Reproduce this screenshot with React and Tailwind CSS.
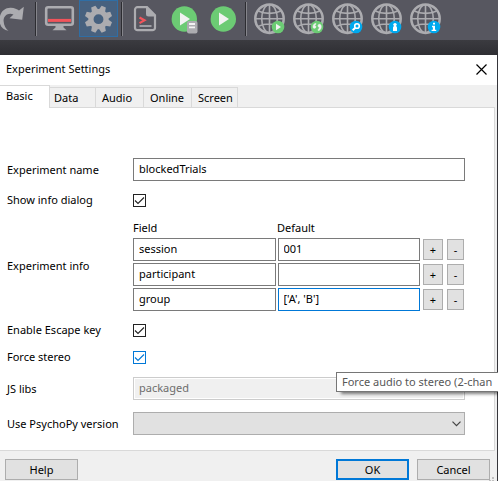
import React from "react";

const toolButton = "flex h-[37px] w-[39px] shrink-0 items-center justify-center";

function Icon({ children }) {
  return (
    <svg width="39" height="37" viewBox="0 0 39 37" fill="none" aria-hidden="true">
      {children}
    </svg>
  );
}

function Separator() {
  return (
    <div className="flex h-[36px] w-[7px] shrink-0 pt-[2px] pl-[2px]">
      <span className="w-px bg-[#2c2c31]" />
      <span className="w-px bg-[#85858b]" />
    </div>
  );
}

function Globe({ label, badge, children }) {
  return (
    <button type="button" aria-label={label} className={toolButton}>
      <Icon>
        <g stroke="#acacb0" strokeWidth="1.6">
          <circle cx="19.5" cy="18.7" r="14.2" strokeWidth="2.5" />
          <ellipse cx="19.5" cy="18.7" rx="7.8" ry="14" />
          <path d="M19.5 4.5v28.4M5.5 18.7h28M8.3 11c6 3.2 16.4 3.2 22.4 0M8.3 26.4c6-3.2 16.4-3.2 22.4 0" />
        </g>
        <circle cx="28" cy="27" r="6.3" fill={badge} />
        {children}
      </Icon>
    </button>
  );
}

const toothAngles = [22.5, 67.5, 112.5, 157.5, 202.5, 247.5, 292.5, 337.5];

function Toolbar() {
  return (
    <div className="flex h-[40px] overflow-hidden bg-[#575760]">
      <button type="button" aria-label="Redo" className={`${toolButton} -ml-1.5`}>
        <Icon>
          <path
            d="M14.5 30.8C9 30 5.500 26 5.500 20C5.500 12 11 7.400 17 7.800C20.500 8 23 9.200 25 10.600L29.800 6.800L28.200 19.800L15.500 18.200L19.500 14.500C14.500 12 9.300 15.500 9.600 21C9.800 25.500 12 29 14.500 30.800Z"
            fill="#acacb0"
          />
        </Icon>
      </button>
      <Separator />
      <button type="button" aria-label="Monitor center" className={toolButton}>
        <Icon>
          <rect x="6.2" y="7.2" width="26.6" height="17.6" rx="2" stroke="#acacb0" strokeWidth="2.6" />
          <path d="M8 20.4h23" stroke="#f2545b" strokeWidth="3" />
          <path d="M15.5 25h8v2.500l3 2.800h-14l3-2.800Z" fill="#acacb0" />
        </Icon>
      </button>
      <button
        type="button"
        aria-label="Experiment settings"
        className={`${toolButton} mr-px border border-[#2f6ea5] bg-[#47617f]`}
      >
        <Icon>
          <g fill="#acacb0">
            <path
              fillRule="evenodd"
              d="M19.5 8.500a10.700 10.700 0 1 0 0 21.400a10.700 10.700 0 1 0 0-21.400ZM19.500 14a5.200 5.200 0 1 1 0 10.400a5.200 5.200 0 1 1 0-10.400Z"
            />
            {toothAngles.map((angle) => (
              <path key={angle} d="M15.900 10l1.200-5.200h4.800l1.200 5.200Z" transform={`rotate(${angle} 19.5 19.2)`} />
            ))}
          </g>
        </Icon>
      </button>
      <Separator />
      <button type="button" aria-label="Compile script" className={toolButton}>
        <Icon>
          <path
            d="M11.500 7.200h9.500l8 8v12.500a2.500 2.500 0 0 1-2.500 2.500h-15a2.500 2.500 0 0 1-2.500-2.500v-18a2.500 2.500 0 0 1 2.500-2.500Z"
            stroke="#acacb0"
            strokeWidth="2.2"
          />
          <path d="M20 6.500l10 10h-7.500a2.500 2.500 0 0 1-2.500-2.500Z" fill="#acacb0" />
          <path d="M13.500 17.500l5 2.800l-5 2.800" stroke="#f2545b" strokeWidth="2.2" />
          <path d="M13.500 26h12" stroke="#acacb0" strokeWidth="1.7" />
        </Icon>
      </button>
      <button type="button" aria-label="Send to runner" className={toolButton}>
        <Icon>
          <circle cx="19.3" cy="19" r="12.7" fill="#6ccb74" />
          <path d="M15 12.500v13l10-6.500Z" fill="#f2f2f2" />
          <rect x="22" y="21" width="10.5" height="12.5" rx="2" fill="#acacb0" />
          <path d="M24 24h6M24 27.300h6" stroke="#f2f2f2" strokeWidth="1.8" />
        </Icon>
      </button>
      <button type="button" aria-label="Run experiment" className={toolButton}>
        <Icon>
          <circle cx="19.3" cy="19" r="12.7" fill="#6ccb74" />
          <path d="M15 12.500v13l10-6.500Z" fill="#f2f2f2" />
        </Icon>
      </button>
      <Separator />
      <Globe label="Run online" badge="#6ccb74">
        <path d="M26 23.800v6.400l5-3.200Z" fill="#f2f2f2" />
      </Globe>
      <Globe label="Sync online" badge="#6ccb74">
        <path
          d="M27 23.500c-2 0-3 1.500-3 3.200c0 1 .6 1.600 1.400 1.600s1.500-.6 1.500-1.400s-.6-1.300-1.200-1.400c.2-.7.7-1 1.300-1.200ZM29.200 30.600c2-.4 3-2 3-3.900c0-1.300-.6-2.400-1.600-2.400s-1.600.7-1.600 1.500s.5 1.400 1.300 1.500c0 1-.4 1.700-1.100 2.300Z"
          fill="#f2f2f2"
          stroke="#f2f2f2"
          strokeWidth=".6"
        />
      </Globe>
      <Globe label="Search online" badge="#00a9ee">
        <circle cx="29" cy="26" r="2.3" stroke="#fff" strokeWidth="1.6" />
        <path d="M27.300 27.700l-2.600 2.500" stroke="#fff" strokeWidth="2" />
      </Globe>
      <Globe label="User account" badge="#00a9ee">
        <circle cx="28" cy="24.6" r="1.7" fill="#fff" />
        <path d="M26 31v-3.300c0-1 .7-1.600 2-1.600s2 .6 2 1.600v3.300Z" fill="#fff" />
      </Globe>
      <Globe label="Online info" badge="#00a9ee">
        <path d="M27 22.800h2v1.800h-2ZM26 25.800h3v4h1.200v1.300h-4.600v-1.300h1.300v-2.600h-.9Z" fill="#fff" />
      </Globe>
    </div>
  );
}

const inputBox =
  "block h-[23px] w-full min-w-0 border border-[#7a7a7a] bg-white px-[5px] pb-[2px] text-black outline-none";
const plainButton = "border border-[#adadad] bg-[#e1e1e1] text-center";

function CheckBox({ id, active }) {
  return (
    <span className="grid size-[13px]">
      <input
        id={id}
        type="checkbox"
        defaultChecked
        className={`peer col-start-1 row-start-1 size-[13px] appearance-none border bg-white ${
          active ? "border-[#0078d7]" : "border-[#222222]"
        }`}
      />
      <svg
        viewBox="0 0 13 13"
        aria-hidden="true"
        className={`pointer-events-none invisible col-start-1 row-start-1 size-[13px] peer-checked:visible ${
          active ? "text-[#0078d7]" : "text-[#222222]"
        }`}
      >
        <path d="M2 6.500l3 3l6-6" fill="none" stroke="currentColor" strokeWidth="1.1" />
      </svg>
    </span>
  );
}

function Row({ label, htmlFor, className = "", children }) {
  return (
    <div className={`grid grid-cols-[126px_minmax(0,1fr)] items-center ${className}`}>
      <label htmlFor={htmlFor}>{label}</label>
      {children}
    </div>
  );
}

const info = [
  { field: "session", value: "001" },
  { field: "participant", value: "" },
  { field: "group", value: "['A', 'B']", focused: true },
];

function ExperimentInfo() {
  return (
    <div className="grid grid-cols-[126px_minmax(0,1fr)] items-center">
      <span>Experiment info</span>
      <div className="flex flex-col gap-[2px]">
        <div className="grid grid-cols-[144fr_188fr] leading-4">
          <span>Field</span>
          <span>Default</span>
        </div>
        {info.map((row) => (
          <div key={row.field} className="flex items-center">
            <div className="grid min-w-0 grow grid-cols-2 gap-[2px]">
              <input aria-label="Field" defaultValue={row.field} className={inputBox} />
              <input
                aria-label={`Default for ${row.field}`}
                defaultValue={row.value}
                className={`${inputBox} ${row.focused ? "border-[#0078d7]!" : ""}`}
              />
            </div>
            <button
              type="button"
              aria-label="Add row"
              className={`${plainButton} ml-[3px] h-[21px] w-5 shrink-0 leading-4`}
            >
              +
            </button>
            <button
              type="button"
              aria-label="Remove row"
              className={`${plainButton} mr-px ml-1 h-[21px] w-[17px] shrink-0 leading-4`}
            >
              -
            </button>
          </div>
        ))}
      </div>
    </div>
  );
}

const tabs = [
  { name: "Data", className: "w-[46px] pl-1" },
  { name: "Audio", className: "w-12 pl-[6px]" },
  { name: "Online", className: "w-12 pl-[6px]" },
  { name: "Screen", className: "w-[46px] pl-[6px]" },
];

export default function App() {
  return (
    <div className="relative overflow-hidden bg-[#36363b] font-['Noto_Sans','Open_Sans',sans-serif] text-[11px] leading-4 text-black">
      <Toolbar />
      <div className="h-[15px] bg-linear-to-b from-[#3b3b40] to-[#2e2e33]" />
      <div role="dialog" aria-labelledby="dialog-title" className="mr-px bg-[#f0f0f0]">
        <header className="flex h-[30px] items-center justify-between bg-white pr-[10px] pb-[2px] pl-[6px]">
          <h1 id="dialog-title">Experiment Settings</h1>
          <button type="button" aria-label="Close">
            <svg width="11" height="11" viewBox="0 0 11 11" aria-hidden="true">
              <path d="M.5 .5l10 10M10.500 .5l-10 10" stroke="#000" strokeWidth="1.2" />
            </svg>
          </button>
        </header>

        <div role="tablist" className="mr-[2px] flex h-[23px] items-end">
          <button
            type="button"
            role="tab"
            aria-selected="true"
            className="h-full w-[50px] border-t border-r border-[#d9d9d9] bg-white pb-[2px] pl-[6px] text-left"
          >
            Basic
          </button>
          {tabs.map((tab) => (
            <button
              key={tab.name}
              type="button"
              role="tab"
              aria-selected="false"
              className={`h-[21px] border-t border-r border-b border-[#d9d9d9] text-left ${tab.className}`}
            >
              {tab.name}
            </button>
          ))}
          <div className="h-full grow border-b border-[#d9d9d9]" />
        </div>

        <div
          role="tabpanel"
          className="mr-[2px] border-r border-b border-[#d9d9d9] bg-white pt-[50px] pr-[29px] pb-[15px] pl-[7px]"
        >
          <Row label="Experiment name" htmlFor="name">
            <input id="name" defaultValue="blockedTrials" className={inputBox} />
          </Row>
          <Row label="Show info dialog" htmlFor="show-info" className="mt-[11px] mb-3">
            <CheckBox id="show-info" />
          </Row>
          <ExperimentInfo />
          <Row label="Enable Escape key" htmlFor="escape" className="mt-[11px]">
            <CheckBox id="escape" />
          </Row>
          <Row label="Force stereo" htmlFor="stereo" className="mt-[11px]">
            <CheckBox id="stereo" active />
          </Row>
          <Row label="JS libs" htmlFor="libs" className="mt-3">
            <input
              id="libs"
              disabled
              defaultValue="packaged"
              className="block h-[23px] w-full border border-[#cccccc] bg-[#f0f0f0] px-[5px] pb-[2px] text-[#6d6d6d] shadow-[inset_0_0_0_1px_#ffffff]"
            />
          </Row>
          <Row label="Use PsychoPy version" htmlFor="version" className="mt-3">
            <span className="grid items-center">
              <select
                id="version"
                className="col-start-1 row-start-1 h-[23px] w-full appearance-none border border-[#adadad] bg-[#e1e1e1] px-[5px]"
              >
                <option value=""></option>
              </select>
              <svg
                width="9"
                height="6"
                viewBox="0 0 9 6"
                aria-hidden="true"
                className="pointer-events-none col-start-1 row-start-1 mr-1 justify-self-end"
              >
                <path d="M.5 .7l4 4l4-4" fill="none" stroke="#444" strokeWidth="1.2" />
              </svg>
            </span>
          </Row>
        </div>

        <footer className="flex items-start gap-2 pt-2 pr-[7px] pb-px pl-[5px]">
          <button type="button" className={`${plainButton} mr-auto h-[21px] w-[73px]`}>
            Help
          </button>
          <button type="button" className="h-[21px] w-[73px] border-2 border-[#0078d7] bg-[#e1e1e1] text-center">
            OK
          </button>
          <button type="button" className={`${plainButton} h-[21px] w-[73px]`}>
            Cancel
          </button>
        </footer>
        <svg
          width="5"
          height="4"
          viewBox="0 0 5 4"
          aria-hidden="true"
          className="absolute right-1 bottom-0 text-[#bfbfbf]"
        >
          <path d="M3 0h2v2h-2ZM0 3h2v1h-2ZM3 3h2v1h-2Z" fill="currentColor" />
        </svg>
      </div>

      <div
        role="tooltip"
        className="absolute top-[372px] right-0 left-[336px] h-5 overflow-hidden border border-r-0 border-[#767676] bg-white pl-[5px] leading-[18px] whitespace-nowrap text-[#575757] shadow-[4px_3px_3px_-1px_rgba(0,0,0,0.5)]"
      >
        Force audio to stereo (2-chan
      </div>
    </div>
  );
}
